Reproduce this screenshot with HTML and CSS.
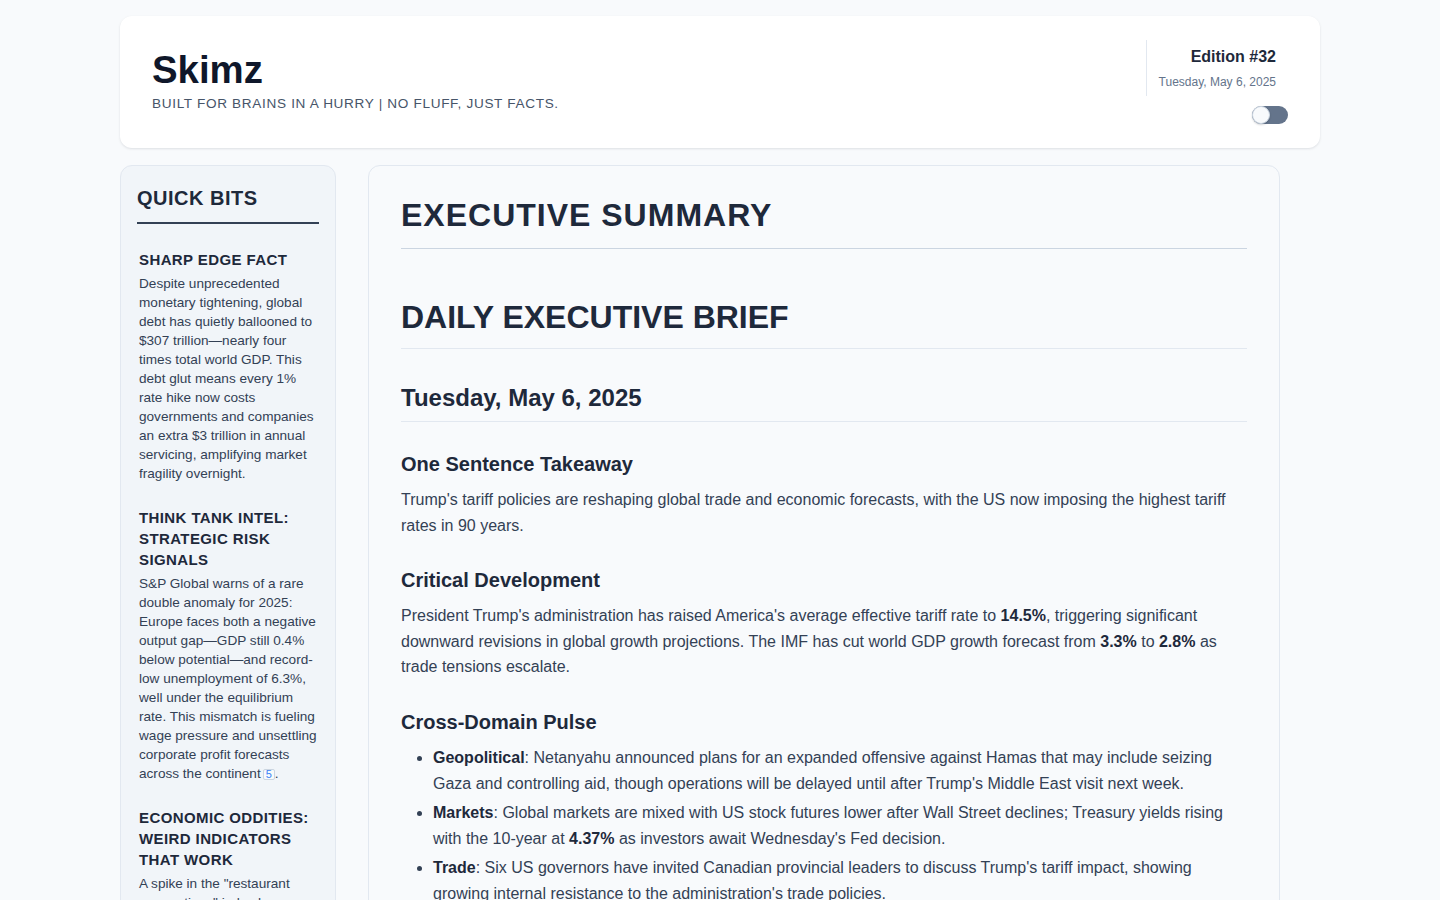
FILE: index.html
```html
<!DOCTYPE html>
<html lang="en">
<head>
<meta charset="utf-8">
<title>Skimz — Edition #32</title>
<link rel="stylesheet" href="styles.css">
</head>
<body>
<div class="page">
  <header class="masthead">
    <div class="brand">
      <h1 class="brand-title">Skimz</h1>
      <p class="brand-tagline">Built for brains in a hurry | No fluff, just facts.</p>
    </div>
    <div class="meta">
      <div class="edition">
        <div class="edition-no">Edition #32</div>
        <div class="edition-date">Tuesday, May 6, 2025</div>
      </div>
      <div class="toggle" role="switch" aria-checked="false"><span class="knob"></span></div>
    </div>
  </header>

  <div class="layout">
    <aside class="sidebar">
      <h2 class="qb-title">Quick Bits</h2>
      <section class="bit">
        <h3 class="bit-title">Sharp Edge Fact</h3>
        <p class="bit-text">Despite unprecedented monetary tightening, global debt has quietly ballooned to $307 trillion—nearly four times total world GDP. This debt glut means every 1% rate hike now costs governments and companies an extra $3 trillion in annual servicing, amplifying market fragility overnight.</p>
      </section>
      <section class="bit">
        <h3 class="bit-title">Think Tank Intel: Strategic Risk Signals</h3>
        <p class="bit-text">S&amp;P Global warns of a rare double anomaly for 2025: Europe faces both a negative output gap—GDP still 0.4% below potential—and record-low unemployment of 6.3%, well under the equilibrium rate. This mismatch is fueling wage pressure and unsettling corporate profit forecasts across the continent<span class="cite">5</span>.</p>
      </section>
      <section class="bit">
        <h3 class="bit-title">Economic Oddities: Weird Indicators That Work</h3>
        <p class="bit-text">A spike in the "restaurant reservations" index has historically led consumer spending data by six to eight weeks, making it one of the earliest reads on household confidence.</p>
      </section>
    </aside>

    <main class="brief">
      <h2 class="exec-title">Executive Summary</h2>
      <h1 class="md-h1">DAILY EXECUTIVE BRIEF</h1>
      <h2 class="md-h2">Tuesday, May 6, 2025</h2>

      <h3 class="md-h3">One Sentence Takeaway</h3>
      <p class="md-p">Trump's tariff policies are reshaping global trade and economic forecasts, with the US now imposing the highest tariff rates in 90 years.</p>

      <h3 class="md-h3">Critical Development</h3>
      <p class="md-p">President Trump's administration has raised America's average effective tariff rate to <strong>14.5%</strong>, triggering significant downward revisions in global growth projections. The IMF has cut world GDP growth forecast from <strong>3.3%</strong> to <strong>2.8%</strong> as trade tensions escalate.</p>

      <h3 class="md-h3">Cross-Domain Pulse</h3>
      <ul class="md-ul">
        <li><strong>Geopolitical</strong>: Netanyahu announced plans for an expanded offensive against Hamas that may include seizing Gaza and controlling aid, though operations will be delayed until after Trump's Middle East visit next week.</li>
        <li><strong>Markets</strong>: Global markets are mixed with US stock futures lower after Wall Street declines; Treasury yields rising with the 10-year at <strong>4.37%</strong> as investors await Wednesday's Fed decision.</li>
        <li><strong>Trade</strong>: Six US governors have invited Canadian provincial leaders to discuss Trump's tariff impact, showing growing internal resistance to the administration's trade policies.</li>
        <li><strong>Tech</strong>: Chipmakers face renewed uncertainty as export-control reviews widen, with supply-chain planners accelerating diversification away from single-country exposure.</li>
      </ul>

      <h3 class="md-h3">What to Watch</h3>
      <p class="md-p">Wednesday's Federal Reserve decision and any guidance on the path of rates as tariff-driven inflation risks collide with slowing growth.</p>
    </main>
  </div>
</div>
</body>
</html>
```

FILE: styles.css
```css
* {
  box-sizing: border-box;
}

body {
  margin: 0;
  background: #f8fafc;
  font-family: "Liberation Sans", Arial, sans-serif;
  color: #334155;
}

.page {
  width: 1200px;
  margin: 0 auto;
  padding: 16px 0 40px;
}

/* Masthead */
.masthead {
  background: #ffffff;
  border-radius: 12px;
  box-shadow: 0 1px 3px rgba(15, 23, 42, 0.08), 0 1px 2px rgba(15, 23, 42, 0.04);
  padding: 24px 32px;
  display: flex;
  justify-content: space-between;
  align-items: flex-start;
}

.brand {
  padding-top: 7px;
}

.brand-title {
  margin: 0;
  font-size: 38.4px;
  line-height: 1.2;
  font-weight: 700;
  color: #0f172a;
}

.brand-tagline {
  margin: 3px 0 0;
  font-size: 13.6px;
  line-height: 1.2;
  letter-spacing: 0.66px;
  text-transform: uppercase;
  color: #475569;
}

.meta {
  display: flex;
  flex-direction: column;
  align-items: flex-end;
}

.edition {
  border-left: 1px solid #e2e8f0;
  padding: 7px 12px 6px;
  text-align: right;
}

.edition-no {
  font-size: 16px;
  line-height: 1.2;
  font-weight: 700;
  color: #1e293b;
}

.edition-date {
  margin-top: 9px;
  font-size: 12px;
  line-height: 1.2;
  color: #64748b;
}

.toggle {
  margin-top: 10px;
  width: 36px;
  height: 18px;
  border-radius: 9px;
  background: #64748b;
  display: flex;
  align-items: center;
}

.knob {
  width: 18px;
  height: 18px;
  border-radius: 50%;
  background: #f8fafc;
  border: 1px solid #cbd5e1;
  box-shadow: 0 1px 2px rgba(15, 23, 42, 0.2);
}

/* Layout */
.layout {
  margin-top: 17px;
  display: grid;
  grid-template-columns: 216px 912px;
  gap: 32px;
  align-items: start;
}

/* Sidebar */
.sidebar {
  background: #f1f5f9;
  border: 1px solid #e2e8f0;
  border-radius: 12px;
  padding: 20px 16px 16px;
}

.qb-title {
  margin: 0 0 25px;
  padding-bottom: 12px;
  border-bottom: 2px solid #334155;
  font-size: 20px;
  line-height: 24px;
  font-weight: 700;
  letter-spacing: 0.5px;
  text-transform: uppercase;
  color: #1e293b;
}

.bit {
  padding: 0 2px;
  margin-bottom: 24px;
}

.bit-title {
  margin: 0 0 4px;
  font-size: 15px;
  line-height: 21px;
  font-weight: 700;
  letter-spacing: 0.4px;
  text-transform: uppercase;
  color: #1e293b;
}

.bit-text {
  margin: 0;
  font-size: 13.6px;
  line-height: 19px;
  color: #334155;
}

.cite {
  display: inline-block;
  margin-left: 2px;
  padding: 0 2px;
  font-size: 11px;
  line-height: 9px;
  vertical-align: 0;
  color: #3b82f6;
  background: #f8fafc;
  border: 1px solid #cbd5e1;
  border-radius: 2px;
}

/* Brief */
.brief {
  background: #f8fafc;
  border: 1px solid #e2e8f0;
  border-radius: 12px;
  padding: 32px;
}

.exec-title {
  margin: 0;
  padding-bottom: 15px;
  border-bottom: 1px solid #cbd5e1;
  font-size: 32px;
  line-height: 1.1;
  font-weight: 700;
  letter-spacing: 1px;
  text-transform: uppercase;
  color: #1e293b;
}

.md-h1 {
  margin: 49px 0 0;
  padding-bottom: 12px;
  border-bottom: 1px solid #e2e8f0;
  font-size: 32px;
  line-height: 1.2;
  font-weight: 700;
  color: #1e293b;
}

.md-h2 {
  margin: 35px 0 0;
  padding-bottom: 8px;
  border-bottom: 1px solid #e2e8f0;
  font-size: 24px;
  line-height: 1.2;
  font-weight: 700;
  color: #1e293b;
}

.md-h3 {
  margin: 30px 0 11px;
  font-size: 20px;
  line-height: 1.2;
  font-weight: 700;
  color: #1e293b;
}

.md-p {
  margin: 0 0 16px;
  font-size: 16px;
  line-height: 1.6;
  color: #334155;
}

.md-p strong,
.md-ul strong {
  color: #1e293b;
}

.md-ul {
  margin: 0 0 16px;
  padding-left: 32px;
  font-size: 16px;
  line-height: 1.6;
  color: #334155;
}

.md-ul li {
  margin-bottom: 4px;
}
```
